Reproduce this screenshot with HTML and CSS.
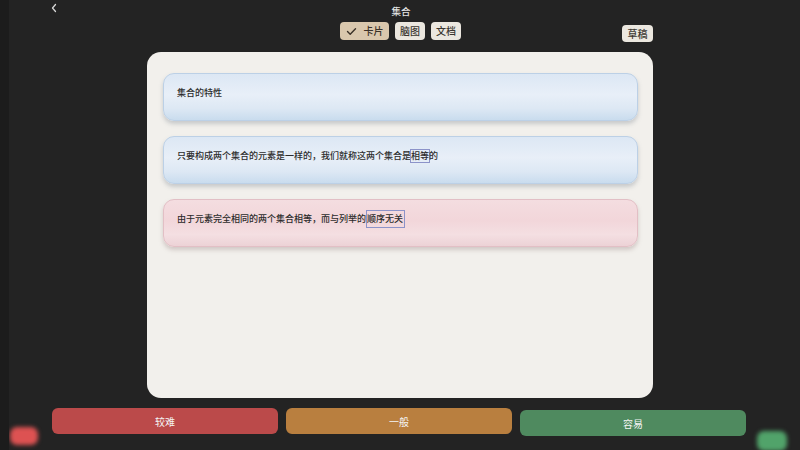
FILE: index.html
```html
<!DOCTYPE html>
<html lang="zh-CN">
<head>
<meta charset="utf-8">
<title>集合</title>
<link rel="stylesheet" href="styles.css">
</head>
<body>
<div class="app">
  <header class="top">
    <div class="title-row">
      <span class="back">
        <svg width="8" height="10" viewBox="0 0 8 10"><path d="M5.5 1.5 L2.5 5 L5.5 8.5" fill="none" stroke="#d8d8d8" stroke-width="1.3" stroke-linecap="round" stroke-linejoin="round"/></svg>
      </span>
      <span class="title">集合</span>
      <span></span>
    </div>
    <div class="tab-row">
      <span></span>
      <div class="tabs">
        <span class="tab active">
          <svg width="11" height="9" viewBox="0 0 11 9"><path d="M1.5 4.5 L4.2 7.2 L9.5 1.8" fill="none" stroke="#3a3128" stroke-width="1.4" stroke-linecap="round" stroke-linejoin="round"/></svg>
          卡片
        </span>
        <span class="tab">脑图</span>
        <span class="tab">文档</span>
      </div>
      <div class="draft-wrap"><span class="tab draft">草稿</span></div>
    </div>
  </header>

  <main class="sheet">
    <div class="item blue">集合的特性</div>
    <div class="item blue">只要构成两个集合的元素是一样的，我们就称这两个集合是<span class="mark small">相等</span>的</div>
    <div class="item pink">由于元素完全相同的两个集合相等，而与列举的<span class="mark big">顺序无关</span></div>
  </main>

  <footer class="actions">
    <button class="btn hard">较难</button>
    <button class="btn mid">一般</button>
    <button class="btn easy">容易</button>
  </footer>

  <span class="glow glow-red"></span>
  <span class="glow glow-green"></span>
  <span class="edge-left"></span>
</div>
</body>
</html>
```

FILE: styles.css
```css
* { box-sizing: border-box; margin: 0; padding: 0; }

html, body {
  width: 800px;
  height: 450px;
  overflow: hidden;
  background: #232323;
}

body {
  font-family: "Noto Sans CJK SC", "Noto Sans", sans-serif;
  color: #2e2e2e;
}

.app {
  position: relative;
  width: 800px;
  height: 450px;
  display: flex;
  flex-direction: column;
  align-items: center;
}

.top {
  width: 100%;
  display: flex;
  flex-direction: column;
  align-items: center;
  gap: 4px;
  padding-top: 3px;
}

.title-row {
  width: 700px;
  display: grid;
  grid-template-columns: 1fr auto 1fr;
  align-items: center;
  height: 15px;
}

.back { display: flex; align-items: center; margin-top: -6px; margin-left: 0; }

.title {
  font-size: 9.5px;
  font-weight: 500;
  color: #e4e4e4;
  margin-left: 2px;
}

.tab-row {
  width: 506px;
  display: grid;
  grid-template-columns: 1fr auto 1fr;
  align-items: start;
  height: 19px;
}

.tabs {
  display: flex;
  gap: 6px;
  align-items: center;
  margin-left: 1px;
}

.tab {
  display: inline-flex;
  align-items: center;
  justify-content: center;
  gap: 7px;
  height: 18px;
  width: 30px;
  background: #ebe7df;
  border-radius: 4px;
  font-size: 10px;
  font-weight: 500;
  color: #3a3630;
  line-height: 1;
}

.tab.active {
  width: 49px;
  background: #d9c7ad;
  color: #3a3128;
}

.draft-wrap { display: flex; justify-content: flex-end; }
.draft { margin-top: 3px; width: 31px; height: 17px; }

.sheet {
  margin-top: 11px;
  width: 506px;
  height: 346px;
  background: #f2f0ec;
  border-radius: 14px;
  padding: 21px 15px 0 16px;
  display: flex;
  flex-direction: column;
  gap: 15px;
}

.item {
  height: 48px;
  border-radius: 11px;
  padding-left: 13px;
  padding-bottom: 9px;
  display: flex;
  align-items: center;
  font-size: 9px;
  font-weight: 500;
  color: #2c2c2c;
  white-space: nowrap;
}

.blue {
  background: linear-gradient(180deg, #dce7f4 0%, #e8eff8 45%, #dde8f4 75%, #c9dcee 100%);
  border: 1px solid #bcd0e6;
  box-shadow: 0 3px 4px rgba(120, 130, 140, 0.35);
}

.pink {
  background: linear-gradient(180deg, #f4dde0 0%, #f2d6da 45%, #f4dfe2 75%, #ecd2d6 100%);
  border: 1px solid #e2bfc5;
  box-shadow: 0 3px 4px rgba(150, 125, 125, 0.35);
}

.mark {
  display: inline-flex;
  align-items: center;
  border: 1px solid #8c93c9;
  line-height: 1;
}
.mark.small { height: 14px; margin: 0 -1px; }
.mark.big { height: 18px; padding-right: 1px; }

.actions {
  margin-top: 10px;
  display: flex;
  gap: 8px;
  width: 694px;
  margin-left: -2px;
}

.btn {
  flex: 1;
  height: 26px;
  border: none;
  border-radius: 6px;
  font-family: "Noto Sans CJK SC", "Noto Sans", sans-serif;
  font-size: 10px;
  color: #f4f4f4;
}

.hard { background: #bb4a4a; }
.mid { background: #b97f3f; }
.easy { background: #4f8a5f; margin-top: 2px; }

.glow {
  position: absolute;
  border-radius: 7px;
  filter: blur(2px);
}
.glow-red {
  left: 10px;
  top: 427px;
  width: 28px;
  height: 18px;
  background: #dd5252;
}
.glow-green {
  left: 757px;
  top: 431px;
  width: 30px;
  height: 20px;
  background: #51a36a;
}
.edge-left {
  position: absolute;
  left: 0;
  top: 0;
  width: 9px;
  height: 450px;
  background: #1c1c1c;
}
```
